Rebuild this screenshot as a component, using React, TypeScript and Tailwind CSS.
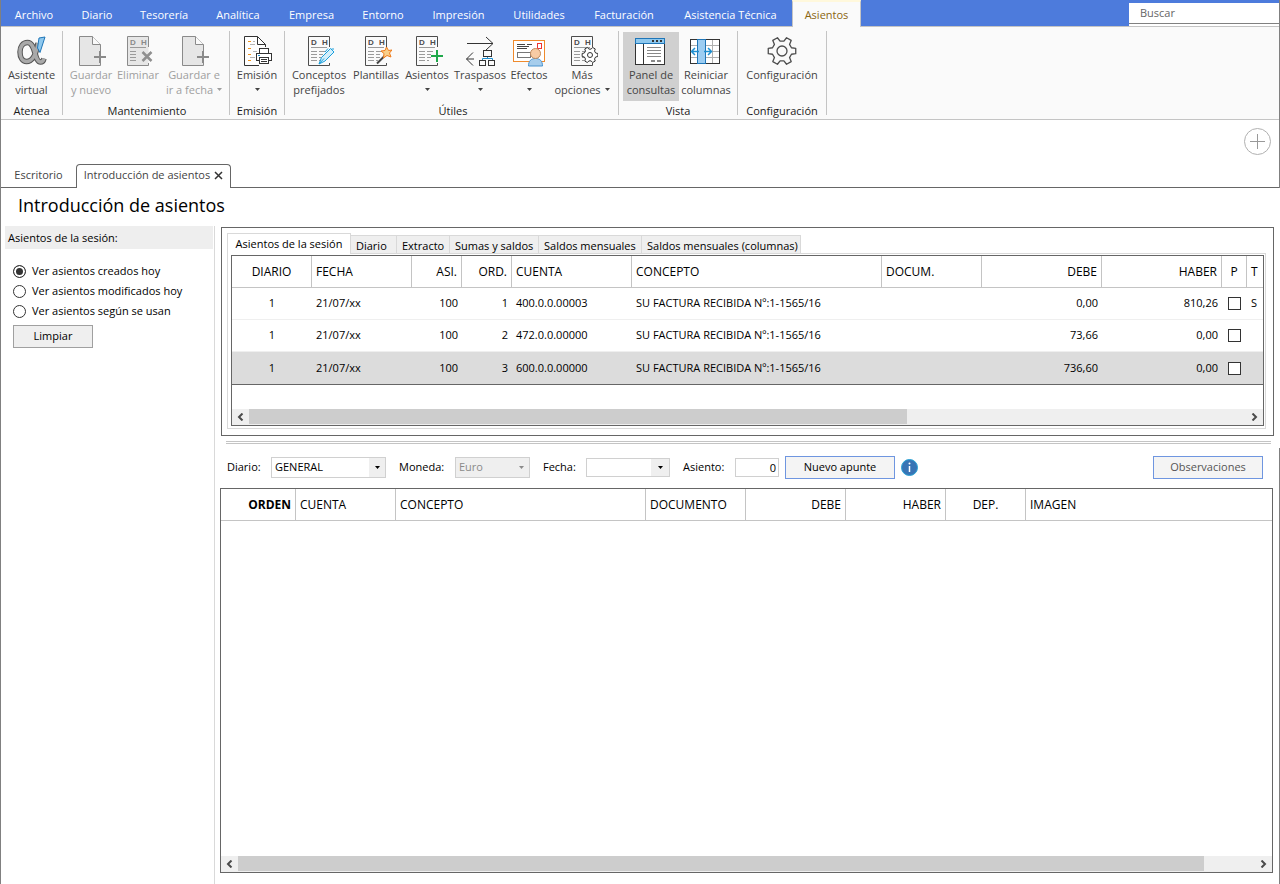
import { useState, type ReactNode } from 'react';
import { clsx } from 'clsx';

const menuItems = [
  { label: 'Archivo', width: 'w-[66px]' },
  { label: 'Diario', width: 'w-[60px]' },
  { label: 'Tesorería', width: 'w-[74px]' },
  { label: 'Analítica', width: 'w-[74px]' },
  { label: 'Empresa', width: 'w-[73px]' },
  { label: 'Entorno', width: 'w-[70px]' },
  { label: 'Impresión', width: 'w-[81px]' },
  { label: 'Utilidades', width: 'w-[80px]' },
  { label: 'Facturación', width: 'w-[90px]' },
  { label: 'Asistencia Técnica', width: 'w-[123px]' },
];

const queryTabs = [
  { label: 'Diario', width: 'w-[46px]' },
  { label: 'Extracto', width: 'w-[53px]' },
  { label: 'Sumas y saldos', width: 'w-[89px]' },
  { label: 'Saldos mensuales', width: 'w-[103px]' },
  { label: 'Saldos mensuales (columnas)', width: 'w-[159px]' },
];

const entries = [
  { diario: 1, fecha: '21/07/xx', asi: 100, ord: 1, cuenta: '400.0.0.00003', debe: '0,00', haber: '810,26', t: 'S' },
  { diario: 1, fecha: '21/07/xx', asi: 100, ord: 2, cuenta: '472.0.0.00000', debe: '73,66', haber: '0,00', t: '' },
  { diario: 1, fecha: '21/07/xx', asi: 100, ord: 3, cuenta: '600.0.0.00000', debe: '736,60', haber: '0,00', t: '' },
];

const sessionFilters = ['Ver asientos creados hoy', 'Ver asientos modificados hoy', 'Ver asientos según se usan'];

function gearPath(cx: number, cy: number, outer: number, inner: number) {
  const points: string[] = [];
  for (let i = 0; i < 6; i++) {
    const base = i * 60;
    const corners = [
      [base - 19, inner],
      [base - 11, outer],
      [base + 11, outer],
      [base + 19, inner],
    ];
    corners.forEach(([deg, r]) => {
      const a = (deg * Math.PI) / 180;
      points.push(`${(cx + r * Math.cos(a)).toFixed(2)} ${(cy + r * Math.sin(a)).toFixed(2)}`);
    });
  }
  return `M${points.join('L')}Z`;
}

/* ---------- Icons ---------- */

function Icon({ children }: { children: ReactNode }) {
  return (
    <svg width="32" height="32" viewBox="0 0 32 32" fill="none" className="shrink-0" aria-hidden="true">
      {children}
    </svg>
  );
}

function LedgerPage({ color = '#4d4d4d', fill = '#fafafa', single = false }: { color?: string; fill?: string; single?: boolean }) {
  return (
    <>
      <path d="M26.5 12V1.5h-21v29h21V28" fill={fill} stroke={color} />
      <text x="8" y="10" fontSize="8" fontWeight="bold" fontFamily="Liberation Sans" fill={color}>D</text>
      <text x="19" y="10" fontSize="8" fontWeight="bold" fontFamily="Liberation Sans" fill={color}>H</text>
      <path d="M8 12.5h16" stroke="#9a9a9a" />
      <path d="M8 16.5h6M8 19.5h6M8 22.5h6M8 25.5h6" stroke="#9a9a9a" />
      {!single && <path d="M16 16.5h6M16 19.5h4M16 22.5h4M16 25.5h2" stroke="#9a9a9a" />}
    </>
  );
}

function AlphaIcon() {
  const bowl = 'M22 8C20 20 16 26.500 10.500 26.500C6.500 26.500 4 22.500 4 17C4 11.500 7 7.500 11.500 7.500C20 7.500 18 27 24.500 27C26.500 27 27.500 25.500 28 23.500';
  return (
    <Icon>
      <path d={bowl} stroke="#555" strokeWidth="5.500" />
      <path d={bowl} stroke="#a9a9a9" strokeWidth="3.500" />
      <path d="M23 3L29 2L24 17.500L21.500 13Z" fill="#8ec8ee" stroke="#1f76b8" />
    </Icon>
  );
}

function NewPageIcon() {
  return (
    <Icon>
      <path d="M25.500 18V9.500L17.500 1.500H4.500V30.500H25.500V27" fill="#e6e6e6" stroke="#8a8a8a" />
      <path d="M17.500 1.500V9.500H25.500" fill="#fafafa" stroke="#8a8a8a" />
      <path d="M19 22H31M25 16V28" stroke="#8a8a8a" strokeWidth="2" />
    </Icon>
  );
}

function DeleteIcon() {
  return (
    <Icon>
      <LedgerPage color="#8a8a8a" fill="#e6e6e6" single />
      <path d="M20.500 17L29.500 26M29.500 17L20.500 26" stroke="#8f8f8f" strokeWidth="2.500" />
    </Icon>
  );
}

function PrintIcon() {
  return (
    <Icon>
      <path d="M24.500 12V9.500L16.500 1.500H3.500V30.500H18" fill="#fff" stroke="#333" />
      <path d="M16.500 1.500V9.500H24.500" stroke="#333" />
      <path d="M7 6.500H10M7 13.500H10M7 19.500H10M7 25.500H10" stroke="#f0951f" />
      <path d="M9 9.500H14M12 6.500H14M12 16.500H16M9 22.500H14" stroke="#b5b5b5" />
      <rect x="18.500" y="13.500" width="9" height="6" fill="#fff" stroke="#333" />
      <rect x="15.500" y="18.500" width="15" height="7" fill="#fff" stroke="#333" />
      <rect x="18.500" y="22.500" width="9" height="6" fill="#fff" stroke="#333" />
      <path d="M20 24.500H26M20 26.500H26" stroke="#333" />
      <path d="M17 20.500H19" stroke="#1f8fd0" />
    </Icon>
  );
}

function ConceptsIcon() {
  return (
    <Icon>
      <LedgerPage />
      <path d="M16 29L18.500 22.500L27.500 13.500L31 17L22 26Z" fill="#d4effb" stroke="#1a9fdc" />
      <path d="M16 29L21 23.500M25 13.500L22 17M31 14L28.500 14" stroke="#1a9fdc" />
    </Icon>
  );
}

function TemplatesIcon() {
  return (
    <Icon>
      <LedgerPage />
      <path d="M17 28.500L25 20.500" stroke="#444" strokeWidth="2" />
      <path d="M26.500 12L28.500 15.500L32 15L29.500 18L31 22L27 20.500L23.500 23L24 18.500L21 16L25 15.500Z" fill="#f9cf8a" stroke="#ef7b1a" />
    </Icon>
  );
}

function EntriesIcon() {
  return (
    <Icon>
      <LedgerPage />
      <path d="M20 21H32M26 15V27" stroke="#1fa84a" strokeWidth="2" />
    </Icon>
  );
}

function TransfersIcon() {
  return (
    <Icon>
      <path d="M3 8.500H29M22 2L29 8.500L22 15" stroke="#333" />
      <path d="M10 24H2.500M9 17.500L2.500 24L9 30.500" stroke="#333" />
      <rect x="19.500" y="15.500" width="8" height="6" stroke="#333" />
      <rect x="15.500" y="25.500" width="6" height="5" stroke="#333" />
      <rect x="24.500" y="25.500" width="6" height="5" stroke="#333" />
      <path d="M18.500 25V23.500H28.500V25M23.500 22V23.500" stroke="#1f8fd0" />
    </Icon>
  );
}

function EffectsIcon() {
  return (
    <Icon>
      <rect x="0.500" y="5.500" width="31" height="21" fill="#fff" stroke="#ef8a2c" />
      <path d="M4 9.500H12M14 9.500H19M4 11.500H16M4 13.500H14" stroke="#444" />
      <rect x="4.500" y="17.500" width="13" height="5" stroke="#777" />
      <rect x="24.500" y="8.500" width="4" height="5" stroke="#e33" />
      <path d="M15.500 31C15.500 26 18 23.500 22.500 23.500S29.500 26 29.500 31Z" fill="#a6cdec" stroke="#4a93cf" />
      <circle cx="22.500" cy="18.500" r="5" fill="#f7cba4" stroke="#c08a5c" />
    </Icon>
  );
}

function OptionsIcon() {
  return (
    <Icon>
      <LedgerPage />
      <path d={gearPath(24, 20, 8, 6)} fill="#fff" stroke="#333" strokeLinejoin="round" />
      <circle cx="24" cy="20" r="2.500" stroke="#333" />
    </Icon>
  );
}

function PanelIcon() {
  return (
    <Icon>
      <rect x="0.500" y="3.500" width="29" height="26" fill="#fff" stroke="#333" />
      <rect x="0.500" y="3.500" width="29" height="5" fill="#8ec8ee" stroke="#1f76b8" />
      <path d="M17 6H19M21 6H23M25 6H27" stroke="#333" strokeWidth="2" />
      <path d="M8.500 9V29" stroke="#333" />
      <path d="M12 12.500H26M12 15.500H26M12 18.500H26M12 21.500H26" stroke="#888" />
      <path d="M16 26H20M22 26H26" stroke="#888" strokeWidth="2" />
    </Icon>
  );
}

function ColumnsIcon() {
  return (
    <Icon>
      <rect x="0.500" y="4.500" width="29" height="24" fill="#fff" stroke="#333" />
      <path d="M1 10.500H29M1 16.500H29M1 22.500H29M22.500 5V28" stroke="#b0b0b0" />
      <rect x="7.500" y="4.500" width="8" height="24" fill="#9ccdf2" stroke="#1f76b8" />
      <path d="M9 16.500H1.500M5 13L1.500 16.500L5 20M14 16.500H21.500M18 13L21.500 16.500L18 20" stroke="#1f8fd0" strokeWidth="1.500" />
    </Icon>
  );
}

function GearIcon() {
  return (
    <Icon>
      <path d={gearPath(16, 16, 14, 10)} stroke="#4d4d4d" strokeWidth="1.300" strokeLinejoin="round" />
      <circle cx="16" cy="16" r="5" stroke="#4d4d4d" strokeWidth="1.300" />
    </Icon>
  );
}

function Caret({ className }: { className?: string }) {
  return (
    <svg width="5" height="3" viewBox="0 0 5 3" fill="currentColor" className={clsx('inline-block', className)} aria-hidden="true">
      <path d="M0 0H5L2.500 3Z" />
    </svg>
  );
}

/* ---------- Ribbon ---------- */

interface RibbonButtonProps {
  icon: ReactNode;
  lines: string[];
  width: string;
  caret?: boolean;
  disabled?: boolean;
  active?: boolean;
}

function RibbonButton({ icon, lines, width, caret, disabled, active }: RibbonButtonProps) {
  return (
    <button
      type="button"
      disabled={disabled}
      className={clsx(
        'flex h-[69px] shrink-0 flex-col items-center pt-[3px] leading-[15px] whitespace-nowrap',
        width,
        disabled ? 'text-[#9f9f9f]' : 'text-[#444]',
        active && 'bg-[#d0d0d0]'
      )}
    >
      {icon}
      <span>{lines[0]}</span>
      <span className="flex h-[15px] items-center gap-1">
        {lines[1]}
        {caret && <Caret />}
      </span>
    </button>
  );
}

function RibbonGroup({ label, padding, children }: { label: string; padding?: string; children: ReactNode }) {
  return (
    <>
      <div className={clsx('flex shrink-0 flex-col pt-px', padding)}>
        <div className="flex">{children}</div>
        <div className="mt-auto text-center leading-4 text-[#1a1a1a]">{label}</div>
      </div>
      <div className="h-[84px] w-px shrink-0 bg-[#c4c4c4]" />
    </>
  );
}

function Ribbon() {
  return (
    <div className="flex h-[93px] border-b border-[#c4c4c4] bg-[#fafafa] pt-1">
      <RibbonGroup label="Atenea">
        <RibbonButton icon={<AlphaIcon />} lines={['Asistente', 'virtual']} width="w-[61px]" />
      </RibbonGroup>
      <RibbonGroup label="Mantenimiento" padding="pl-1 pr-0.5">
        <RibbonButton icon={<NewPageIcon />} lines={['Guardar', 'y nuevo']} width="w-12" disabled />
        <RibbonButton icon={<DeleteIcon />} lines={['Eliminar', '']} width="w-[46px]" disabled />
        <RibbonButton icon={<NewPageIcon />} lines={['Guardar e', 'ir a fecha']} width="w-[66px]" disabled caret />
      </RibbonGroup>
      <RibbonGroup label="Emisión">
        <RibbonButton icon={<PrintIcon />} lines={['Emisión', '']} width="w-[54px]" caret />
      </RibbonGroup>
      <RibbonGroup label="Útiles" padding="pl-[5px] pr-0.5">
        <RibbonButton icon={<ConceptsIcon />} lines={['Conceptos', 'prefijados']} width="w-[58px]" />
        <RibbonButton icon={<TemplatesIcon />} lines={['Plantillas', '']} width="w-14" />
        <RibbonButton icon={<EntriesIcon />} lines={['Asientos', '']} width="w-[46px]" caret />
        <RibbonButton icon={<TransfersIcon />} lines={['Traspasos', '']} width="w-[60px]" caret />
        <RibbonButton icon={<EffectsIcon />} lines={['Efectos', '']} width="w-[38px]" caret />
        <RibbonButton icon={<OptionsIcon />} lines={['Más', 'opciones']} width="w-[68px]" caret />
      </RibbonGroup>
      <RibbonGroup label="Vista" padding="px-1">
        <RibbonButton icon={<PanelIcon />} lines={['Panel de', 'consultas']} width="w-14" active />
        <RibbonButton icon={<ColumnsIcon />} lines={['Reiniciar', 'columnas']} width="w-[54px]" />
      </RibbonGroup>
      <RibbonGroup label="Configuración">
        <RibbonButton icon={<GearIcon />} lines={['Configuración', '']} width="w-[88px]" />
      </RibbonGroup>
    </div>
  );
}

/* ---------- Shared pieces ---------- */

function ScrollBar({ thumb }: { thumb: string }) {
  return (
    <div className="flex h-4 bg-[#efefef] pb-px text-[#4a4a4a]">
      <button type="button" aria-label="Desplazar a la izquierda" className="flex w-[17px] items-center justify-center">
        <svg width="7" height="8" viewBox="0 0 7 8" fill="none" stroke="currentColor" strokeWidth="2">
          <path d="M5.500 0.500L2 4L5.500 7.500" />
        </svg>
      </button>
      <div className="flex-1">
        <div className={clsx('h-full bg-[#cdcdcd]', thumb)} />
      </div>
      <button type="button" aria-label="Desplazar a la derecha" className="flex w-[17px] items-center justify-center">
        <svg width="7" height="8" viewBox="0 0 7 8" fill="none" stroke="currentColor" strokeWidth="2">
          <path d="M1.500 0.500L5 4L1.500 7.500" />
        </svg>
      </button>
    </div>
  );
}

function Th({ children, className }: { children: ReactNode; className?: string }) {
  return (
    <th className={clsx('h-8 border-r border-b border-[#c4c4c4] px-1 text-xs whitespace-nowrap last:border-r-0', className)}>
      {children}
    </th>
  );
}

function SessionTable() {
  return (
    <table className="w-full table-fixed border-separate border-spacing-0 text-black">
      <colgroup>
        <col className="w-[80px]" />
        <col className="w-[100px]" />
        <col className="w-[50px]" />
        <col className="w-[50px]" />
        <col className="w-[120px]" />
        <col className="w-[250px]" />
        <col className="w-[100px]" />
        <col className="w-[120px]" />
        <col className="w-[120px]" />
        <col className="w-[25px]" />
        <col />
      </colgroup>
      <thead>
        <tr>
          <Th className="text-center font-normal">DIARIO</Th>
          <Th className="text-left font-normal">FECHA</Th>
          <Th className="text-right font-normal">ASI.</Th>
          <Th className="text-right font-normal">ORD.</Th>
          <Th className="text-left font-normal">CUENTA</Th>
          <Th className="text-left font-normal">CONCEPTO</Th>
          <Th className="text-left font-normal">DOCUM.</Th>
          <Th className="text-right font-normal">DEBE</Th>
          <Th className="text-right font-normal">HABER</Th>
          <Th className="text-center font-normal">P</Th>
          <Th className="text-left font-normal">T</Th>
        </tr>
      </thead>
      <tbody>
        {entries.map((entry, i) => (
          <tr
            key={entry.ord}
            className={clsx(
              '[&>td]:border-b [&>td]:px-1 [&>td]:whitespace-nowrap',
              i === entries.length - 1
                ? 'bg-[#dcdcdc] [&>td]:h-[33px] [&>td]:border-[#666]'
                : '[&>td]:h-8 [&>td]:border-[#efefef]'
            )}
          >
            <td className="text-center">{entry.diario}</td>
            <td>{entry.fecha}</td>
            <td className="text-right">{entry.asi}</td>
            <td className="text-right">{entry.ord}</td>
            <td>{entry.cuenta}</td>
            <td>SU FACTURA RECIBIDA Nº:1-1565/16</td>
            <td />
            <td className="text-right">{entry.debe}</td>
            <td className="text-right">{entry.haber}</td>
            <td>
              <input
                type="checkbox"
                aria-label={`Punteado del apunte ${entry.ord}`}
                className="mx-auto block size-[13px] appearance-none border border-[#333] bg-white checked:bg-[#333]"
              />
            </td>
            <td>{entry.t}</td>
          </tr>
        ))}
      </tbody>
    </table>
  );
}

function EntryForm() {
  return (
    <form className="flex items-center pt-2 pr-4 pl-3 whitespace-nowrap text-black" onSubmit={(e) => e.preventDefault()}>
      <label htmlFor="diario" className="w-11">Diario:</label>
      <div className="flex h-[21px] w-[115px] border border-[#d0d0d0]">
        <select id="diario" className="min-w-0 flex-1 appearance-none pl-[3px] outline-none">
          <option>GENERAL</option>
        </select>
        <span className="pointer-events-none flex w-4 items-center justify-center bg-[#efefef]">
          <Caret />
        </span>
      </div>
      <label htmlFor="moneda" className="ml-[13px] w-14">Moneda:</label>
      <div className="flex h-[21px] w-[75px] border border-[#d0d0d0] bg-[#efefef] text-[#8a8a8a]">
        <select id="moneda" disabled className="min-w-0 flex-1 appearance-none pl-[3px]">
          <option>Euro</option>
        </select>
        <span className="flex w-4 items-center justify-center">
          <Caret />
        </span>
      </div>
      <label htmlFor="fecha" className="ml-[13px] w-[43px]">Fecha:</label>
      <div className="flex h-[19px] w-[84px] border border-[#d0d0d0]">
        <input id="fecha" type="text" className="min-w-0 flex-1 px-1 outline-none" />
        <button type="button" aria-label="Elegir fecha" className="flex w-[18px] items-center justify-center bg-[#efefef]">
          <Caret />
        </button>
      </div>
      <label htmlFor="asiento" className="ml-[13px] w-[52px]">Asiento:</label>
      <input id="asiento" type="text" defaultValue="0" className="h-[19px] w-11 border border-[#d0d0d0] pr-0.5 text-right outline-none" />
      <button type="button" className="ml-1.5 h-[23px] w-[110px] border border-[#6f96e0] bg-[#f4f4f4]">
        Nuevo apunte
      </button>
      <button type="button" aria-label="Información" className="ml-1.5">
        <svg width="17" height="17" viewBox="0 0 17 17">
          <circle cx="8.500" cy="8.500" r="8" fill="#3874b5" stroke="#2ba3d4" />
          <path d="M8.500 7V13" stroke="#fff" strokeWidth="1.500" />
          <circle cx="8.500" cy="4.500" r="1" fill="#fff" />
        </svg>
      </button>
      <button type="button" className="ml-auto h-[23px] w-[110px] border border-[#6f96e0] bg-[#f4f4f4] text-[#555]">
        Observaciones
      </button>
    </form>
  );
}

function PostingTable() {
  return (
    <div className="mt-[9px] mr-1.5 mb-[11px] ml-[5px] flex flex-1 flex-col border border-[#666]">
      <table className="w-full table-fixed border-separate border-spacing-0 text-black">
        <colgroup>
          <col className="w-[75px]" />
          <col className="w-[100px]" />
          <col className="w-[250px]" />
          <col className="w-[100px]" />
          <col className="w-[100px]" />
          <col className="w-[100px]" />
          <col className="w-[80px]" />
          <col />
        </colgroup>
        <thead>
          <tr>
            <Th className="text-right font-bold">ORDEN</Th>
            <Th className="text-left font-normal">CUENTA</Th>
            <Th className="text-left font-normal">CONCEPTO</Th>
            <Th className="text-left font-normal">DOCUMENTO</Th>
            <Th className="text-right font-normal">DEBE</Th>
            <Th className="text-right font-normal">HABER</Th>
            <Th className="text-center font-normal">DEP.</Th>
            <Th className="text-left font-normal">IMAGEN</Th>
          </tr>
        </thead>
      </table>
      <div className="mt-auto">
        <ScrollBar thumb="w-[95%]" />
      </div>
    </div>
  );
}

/* ---------- Page ---------- */

export default function App() {
  const [filter, setFilter] = useState(0);

  return (
    <div className="flex min-h-screen flex-col border-l border-[#808080] bg-white font-['Open_Sans','Noto_Sans',sans-serif] text-[11px]">
      <header className="border-r border-[#808080]">
        <nav className="flex h-[27px] border-b border-[#c4c4c4] bg-[#4d7bdc] text-white">
          {menuItems.map((item) => (
            <a key={item.label} href="#" className={clsx('shrink-0 text-center leading-[30px] whitespace-nowrap', item.width)}>
              {item.label}
            </a>
          ))}
          <a
            href="#"
            className="-mb-px w-[69px] shrink-0 border-x border-t-2 border-x-[#c4c4c4] border-t-[#fff8dc] bg-[#fafafa] text-center leading-[26px] text-[#8a6510]"
          >
            Asientos
          </a>
          <div className="mt-[3px] ml-auto w-[150px] bg-white">
            <input
              type="search"
              aria-label="Buscar"
              placeholder="Buscar"
              className="block h-[21px] w-full border-b border-[#808080] px-[11px] pb-0.5 outline-none placeholder:text-[#666]"
            />
          </div>
        </nav>
        <Ribbon />
        <div className="flex h-[68px] flex-col">
          <button type="button" aria-label="Añadir" className="mt-2 mr-2 self-end text-[#b0b0b0]">
            <svg width="27" height="27" viewBox="0 0 27 27" fill="none" stroke="currentColor">
              <circle cx="13.500" cy="13.500" r="13" />
              <path d="M6 13.500H21M13.500 6V21" stroke="#999" />
            </svg>
          </button>
          <div className="mt-auto flex text-[#444]">
            <a href="#" className="w-[75px] border-b border-[#666] text-center leading-[22px]">
              Escritorio
            </a>
            <div className="flex h-6 w-[155px] items-center justify-center gap-1 rounded-t-[4px] border border-b-0 border-[#666] pb-0.5 whitespace-nowrap">
              Introducción de asientos
              <button type="button" aria-label="Cerrar pestaña">
                <svg width="9" height="9" viewBox="0 0 9 9" stroke="#333" strokeWidth="1.500">
                  <path d="M1 1L8 8M8 1L1 8" />
                </svg>
              </button>
            </div>
            <div className="flex-1 border-b border-[#666]" />
          </div>
        </div>
      </header>

      <main className="flex flex-1 flex-col">
        <h1 className="h-[38px] pl-[17px] text-lg leading-[34px] text-black">Introducción de asientos</h1>
        <div className="flex flex-1">
          <aside className="w-[214px] shrink-0 border-r border-[#d9d9d9] text-black">
            <h2 className="mr-px ml-1 bg-[#eee] pl-[3px] leading-[23px]">Asientos de la sesión:</h2>
            <fieldset className="mt-3 pl-3">
              {sessionFilters.map((label, i) => (
                <label key={label} className="flex h-5 items-center gap-1.5">
                  <input
                    type="radio"
                    name="session-filter"
                    checked={filter === i}
                    onChange={() => setFilter(i)}
                    className="size-[13px] appearance-none rounded-full border border-[#333] bg-white checked:bg-[#333] checked:shadow-[inset_0_0_0_2px_#fff]"
                  />
                  {label}
                </label>
              ))}
            </fieldset>
            <button type="button" className="mt-1 ml-3 h-[23px] w-20 border border-[#a0a0a0] bg-[#efefef]">
              Limpiar
            </button>
          </aside>

          <section className="flex min-w-0 flex-1 flex-col">
            <div className="mt-px mr-1.5 ml-1.5 border border-[#666] pt-[5px] pr-[7px] pb-1.5 pl-[5px]">
              <div role="tablist" className="flex items-end text-black">
                <button
                  type="button"
                  role="tab"
                  aria-selected="true"
                  className="relative -mb-px h-[21px] w-[124px] border border-b-0 border-[#d9d9d9] bg-white whitespace-nowrap"
                >
                  Asientos de la sesión
                </button>
                {queryTabs.map((tab) => (
                  <button
                    key={tab.label}
                    type="button"
                    role="tab"
                    aria-selected="false"
                    className={clsx(
                      'h-[18px] border-t border-r border-[#d9d9d9] bg-[#efefef] pt-0.5 pl-[5px] text-left leading-[15px] whitespace-nowrap',
                      tab.width
                    )}
                  >
                    {tab.label}
                  </button>
                ))}
              </div>
              <div className="border border-[#d9d9d9] pt-px pr-px pb-0.5 pl-[3px]">
                <div className="overflow-hidden border border-[#666]">
                  <SessionTable />
                  <div className="mt-6">
                    <ScrollBar thumb="w-[66%]" />
                  </div>
                </div>
              </div>
            </div>
            <div className="mt-[5px] mr-[9px] ml-[11px] h-[3px] border-y border-[#c4c4c4]" />
            <div className="mt-1 flex flex-1 flex-col border-r border-[#808080]">
              <EntryForm />
              <PostingTable />
            </div>
          </section>
        </div>
      </main>
    </div>
  );
}
